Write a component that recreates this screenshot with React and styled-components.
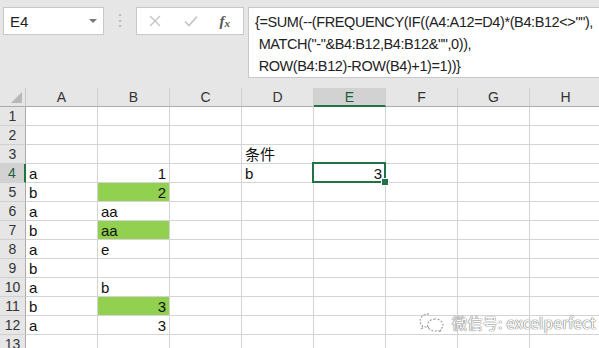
import React from "react";
import styled, { createGlobalStyle } from "styled-components";

const GlobalStyle = createGlobalStyle`
  html, body {
    margin: 0;
    padding: 0;
    background: #fff;
  }
  body {
    width: 599px;
    height: 348px;
    overflow: hidden;
    font-family: "Liberation Sans", "Noto Sans CJK SC", sans-serif;
  }
`;

const cols = ["A", "B", "C", "D", "E", "F", "G", "H"];

const rows = [
  {},
  {},
  { D: "条件" },
  { A: "a", B: { v: "1", num: true }, D: "b", E: { v: "3", num: true } },
  { A: "b", B: { v: "2", num: true, fill: true } },
  { A: "a", B: { v: "aa" } },
  { A: "b", B: { v: "aa", fill: true } },
  { A: "a", B: { v: "e" } },
  { A: "b" },
  { A: "a", B: { v: "b" } },
  { A: "b", B: { v: "3", num: true, fill: true } },
  { A: "a", B: { v: "3", num: true } },
  {},
];

const App = () => {
  return (
    <Page>
      <GlobalStyle />
      <Toolbar>
        <NameBox>
          <span>E4</span>
          <Caret />
        </NameBox>
        <Dots>⋮</Dots>
        <ButtonBox>
          <ToolIcon>
            <svg width="14" height="14" viewBox="0 0 14 14">
              <path d="M2 2 L12 12 M12 2 L2 12" stroke="#c4c4c4" strokeWidth="1.4" fill="none" />
            </svg>
          </ToolIcon>
          <ToolIcon>
            <svg width="16" height="14" viewBox="0 0 16 14">
              <path d="M2 7.5 L6 11.5 L14 2.5" stroke="#c4c4c4" strokeWidth="1.6" fill="none" />
            </svg>
          </ToolIcon>
          <Fx>
            f<sub>x</sub>
          </Fx>
        </ButtonBox>
        <FormulaBox>
          <Line>{'{=SUM(--(FREQUENCY(IF((A4:A12=D4)*(B4:B12<>""),'}</Line>
          <Line>{' MATCH("-"&B4:B12,B4:B12&"",0)),'}</Line>
          <Line>{" ROW(B4:B12)-ROW(B4)+1)=1))}"}</Line>
        </FormulaBox>
      </Toolbar>

      <Sheet>
        <Corner>
          <Triangle />
        </Corner>
        {cols.map((c) => (
          <ColHead key={c} active={c === "E"}>
            {c}
          </ColHead>
        ))}
        {rows.map((r, i) => (
          <React.Fragment key={i}>
            <RowHead active={i === 3}>{i + 1}</RowHead>
            {cols.map((c) => {
              const d = r[c];
              const cell = typeof d === "string" ? { v: d } : d || {};
              return (
                <Cell
                  key={c}
                  num={cell.num}
                  fill={cell.fill ? 1 : 0}
                  selected={i === 3 && c === "E"}
                >
                  {cell.v}
                </Cell>
              );
            })}
          </React.Fragment>
        ))}
      </Sheet>

      <Watermark>
        <svg width="28" height="22" viewBox="0 0 28 22">
          <g fill="none" stroke="#9a9a9a" strokeWidth="1.1" strokeDasharray="2 1.5">
            <path d="M11 3 C5 3 2 6.5 2 10 C2 12 3 13.5 4.5 14.7 L3.5 17.5 L7 15.8 C8.2 16.2 9.5 16.4 11 16.4" />
            <path d="M17 8 C12.5 8 9.5 10.8 9.5 14 C9.5 17.2 12.5 20 17 20 C18 20 19 19.8 20 19.5 L23 21 L22.3 18.5 C24 17.3 25 15.7 25 14 C25 10.8 21.5 8 17 8 Z" />
          </g>
        </svg>
        <WText>微信号: excelperfect</WText>
      </Watermark>
    </Page>
  );
};

const Page = styled.div`
  position: relative;
  width: 599px;
  height: 348px;
  overflow: hidden;
  background: #fff;
`;

const Toolbar = styled.div`
  height: 88px;
  box-sizing: border-box;
  background: #e6e6e6;
  display: flex;
  align-items: flex-start;
  padding: 7px 0 0 3px;
  & > * {
    flex-shrink: 0;
  }
`;

const Box = styled.div`
  box-sizing: border-box;
  background: #fff;
  border: 1px solid #c8c8c8;
  height: 28px;
`;

const NameBox = styled(Box)`
  width: 101px;
  display: flex;
  align-items: center;
  justify-content: space-between;
  padding: 0 6px 0 6px;
  font-size: 15px;
  color: #222;
`;

const Caret = styled.div`
  width: 0;
  height: 0;
  border-left: 4px solid transparent;
  border-right: 4px solid transparent;
  border-top: 4px solid #777;
`;

const Dots = styled.div`
  width: 32px;
  text-align: center;
  color: #b5b5b5;
  font-size: 16px;
  line-height: 28px;
`;

const ButtonBox = styled(Box)`
  width: 108px;
  display: flex;
  align-items: center;
  justify-content: space-between;
  padding: 0 13px 0 11px;
`;

const ToolIcon = styled.div`
  display: flex;
  align-items: center;
`;

const Fx = styled.div`
  font-family: "Liberation Serif", serif;
  font-style: italic;
  font-weight: bold;
  font-size: 15px;
  color: #555;
  sub {
    font-size: 11px;
    vertical-align: -1px;
  }
`;

const FormulaBox = styled(Box)`
  margin-left: 4px;
  height: 71px;
  width: 400px;
  padding: 3px 0 0 6px;
  white-space: pre;
`;

const Line = styled.div`
  height: 22px;
  line-height: 22px;
  font-size: 14.5px;
  color: #222;
  letter-spacing: -0.4px;
`;

const Sheet = styled.div`
  display: grid;
  grid-template-columns: 26px repeat(8, 72px);
  grid-auto-rows: 19px;
  font-family: "Liberation Sans", "Noto Sans CJK SC", sans-serif;
`;

const Corner = styled.div`
  position: relative;
  background: #e6e6e6;
  border-right: 1px solid #c9c9c9;
  border-bottom: 1px solid #ababab;
`;

const Triangle = styled.div`
  position: absolute;
  right: 3px;
  bottom: 3px;
  width: 0;
  height: 0;
  border-left: 11px solid transparent;
  border-bottom: 11px solid #b8b8b8;
`;

const ColHead = styled.div`
  box-sizing: border-box;
  background: ${(p) => (p.active ? "#d2d2d2" : "#e6e6e6")};
  border-right: 1px solid #d0d0d0;
  border-bottom: ${(p) => (p.active ? "2px solid #217346" : "1px solid #ababab")};
  text-align: center;
  font-size: 14px;
  line-height: 19px;
  color: ${(p) => (p.active ? "#1e5e3a" : "#333")};
`;

const RowHead = styled.div`
  box-sizing: border-box;
  background: ${(p) => (p.active ? "#d2d2d2" : "#e6e6e6")};
  border-right: ${(p) => (p.active ? "2px solid #217346" : "1px solid #ababab")};
  border-bottom: 1px solid #d0d0d0;
  text-align: center;
  font-size: 14px;
  line-height: 19px;
  color: ${(p) => (p.active ? "#1e5e3a" : "#333")};
`;

const Cell = styled.div`
  position: relative;
  box-sizing: border-box;
  border-right: 1px solid #d4d4d4;
  border-bottom: 1px solid #d4d4d4;
  background: ${(p) => (p.fill ? "#92d050" : "#fff")};
  padding: 0 3px;
  font-size: 15px;
  line-height: 19px;
  color: #111;
  text-align: ${(p) => (p.num ? "right" : "left")};
  white-space: nowrap;
  ${(p) =>
    p.selected &&
    `
    &::after {
      content: "";
      position: absolute;
      left: -2px;
      top: -2px;
      right: -1px;
      bottom: -1px;
      border: 2px solid #217346;
    }
    &::before {
      content: "";
      position: absolute;
      right: -4px;
      bottom: -4px;
      width: 6px;
      height: 6px;
      background: #217346;
      border: 1px solid #fff;
      z-index: 1;
    }
  `}
`;

const Watermark = styled.div`
  position: absolute;
  left: 418px;
  top: 311px;
  display: flex;
  align-items: center;
  gap: 6px;
  white-space: nowrap;
`;

const WText = styled.span`
  font-family: "Noto Sans CJK SC", sans-serif;
  font-size: 15px;
  letter-spacing: 0.4px;
  color: #fff;
  white-space: nowrap;
  text-shadow: 0 0 1px #777, 0 0 1px #777, 0 0 1px #777;
`;

export default App;
